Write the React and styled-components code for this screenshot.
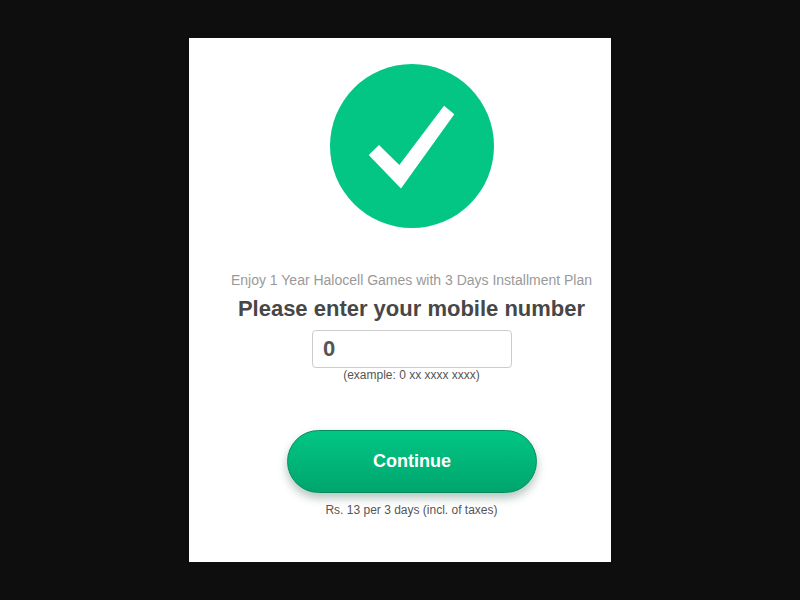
import React from 'react'
import styled, { createGlobalStyle } from 'styled-components'

const GlobalStyle = createGlobalStyle`
  html, body {
    margin: 0;
    padding: 0;
    background: #0e0e0e;
  }
`

const Page = styled.div`
  width: 800px;
  height: 600px;
  padding-top: 38px;
  box-sizing: border-box;
  display: flex;
  justify-content: center;
  background: #0e0e0e;
  font-family: 'Liberation Sans', Arial, sans-serif;
`

const Card = styled.div`
  width: 422px;
  height: 524px;
  padding: 26px 0 0 24px;
  box-sizing: border-box;
  display: flex;
  flex-direction: column;
  align-items: center;
  background: #fff;
`

const Badge = styled.svg`
  display: block;
  width: 164px;
  height: 164px;
  margin-bottom: 44px;
`

const Offer = styled.p`
  margin: 0 1px 8px 0;
  font-size: 14px;
  line-height: 16px;
  color: #999;
`

const Title = styled.h1`
  margin: 0 1px 8px 0;
  font-size: 22px;
  line-height: 26px;
  font-weight: bold;
  color: #474747;
`

const NumberInput = styled.input`
  width: 200px;
  height: 38px;
  padding: 0 10px;
  box-sizing: border-box;
  border: 1px solid #ccc;
  border-radius: 4px;
  outline: none;
  background: #fff;
  font-family: inherit;
  font-size: 22px;
  font-weight: bold;
  color: #555;
`

const Hint = styled.span`
  margin: 0 1px 48px 0;
  font-size: 12px;
  line-height: 14px;
  color: #555;
`

const ContinueButton = styled.button`
  width: 250px;
  height: 63px;
  margin-bottom: 10px;
  border: 1px solid #048a5f;
  border-radius: 32px;
  background: linear-gradient(to bottom, #02c684, #00a56d);
  box-shadow: 0 5px 10px rgba(0, 60, 40, 0.3);
  font-family: inherit;
  font-size: 18px;
  font-weight: bold;
  color: #fff;
  cursor: pointer;
`

const Price = styled.span`
  margin-right: 1px;
  font-size: 12px;
  line-height: 14px;
  color: #555;
`

export default function App() {
  return (
    <Page>
      <GlobalStyle />
      <Card>
        <Badge viewBox="0 0 164 164">
          <circle cx="82" cy="82" r="82" fill="#03c685" />
          <polygon
            points="114,41.7 124.3,50.3 71,124.5 38.7,91 49,81 69.3,101"
            fill="#fff"
          />
        </Badge>
        <Offer>Enjoy 1 Year Halocell Games with 3 Days Installment Plan</Offer>
        <Title>Please enter your mobile number</Title>
        <NumberInput type="text" defaultValue="0" />
        <Hint>(example: 0 xx xxxx xxxx)</Hint>
        <ContinueButton>Continue</ContinueButton>
        <Price>Rs. 13 per 3 days (incl. of taxes)</Price>
      </Card>
    </Page>
  )
}
